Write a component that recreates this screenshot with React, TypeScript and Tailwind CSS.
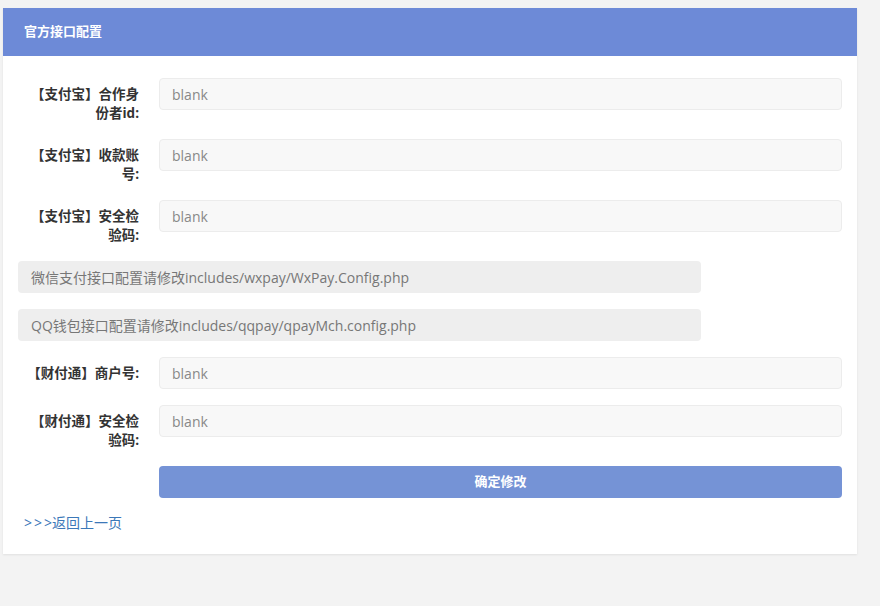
const font = { fontFamily: '"Open Sans", "Noto Sans CJK SC", sans-serif' };

const fields = {
  alipay: [
    { label: "【支付宝】合作身份者id:", value: "blank" },
    { label: "【支付宝】收款账号:", value: "blank" },
    { label: "【支付宝】安全检验码:", value: "blank" },
  ],
  tenpay: [
    { label: "【财付通】商户号:", value: "blank" },
    { label: "【财付通】安全检验码:", value: "blank" },
  ],
};

function FieldRow({ label, value }: { label: string; value: string }) {
  return (
    <div className="flex items-start mb-4">
      <label className="w-[121px] shrink-0 pt-[7px] pl-2 text-right text-[13.5px] font-bold leading-[19px] text-[#333]">
        {label}
      </label>
      <input
        readOnly
        value={value}
        className="ml-5 h-8 flex-1 rounded-sm border border-[#ececec] bg-[#f8f8f8] px-3 text-[14px] text-[#888] outline-none"
      />
    </div>
  );
}

function Notice({ children }: { children: string }) {
  return (
    <div className="mb-4 flex h-8 w-[683px] items-center rounded-sm bg-[#eeeeee] px-[13px] text-[14px] text-[#777]">
      {children}
    </div>
  );
}

export default function App() {
  return (
    <div className="min-h-[606px] bg-[#f3f3f3] pt-2 pl-[3px]" style={font}>
      <div className="w-[854px] bg-white shadow-[0_1px_2px_rgba(0,0,0,0.08)]">
        <div className="flex h-12 items-center bg-[#6d8ad7] px-[21px] text-[13px] font-bold text-white">
          官方接口配置
        </div>
        <div className="px-[15px] pt-[22px] pb-[20px]">
          {fields.alipay.map((f) => (
            <FieldRow key={f.label} {...f} />
          ))}
          <Notice>微信支付接口配置请修改includes/wxpay/WxPay.Config.php</Notice>
          <Notice>QQ钱包接口配置请修改includes/qqpay/qpayMch.config.php</Notice>
          {fields.tenpay.map((f) => (
            <FieldRow key={f.label} {...f} />
          ))}
          <div className="flex">
            <button className="ml-[141px] h-8 flex-1 rounded-sm bg-[#7593d6] text-[13px] font-bold text-white">
              确定修改
            </button>
          </div>
          <a href="#" className="mt-[14px] block pl-[6px] text-[14px] leading-[22px] text-[#3c78b8]">
            <span className="tracking-[2px]">&gt;&gt;</span>&gt;返回上一页
          </a>
        </div>
      </div>
    </div>
  );
}
